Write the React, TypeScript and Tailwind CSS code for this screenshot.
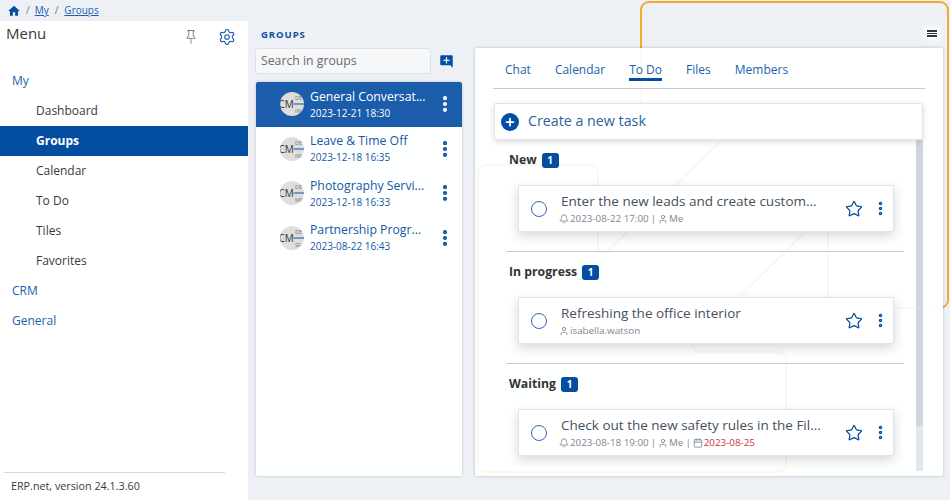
import { useId } from "react"
import { Bell, Calendar, EllipsisVertical, Plus, Settings, Star, User } from "lucide-react"
import { BsPin } from "react-icons/bs"
import { MdAddComment, MdHome } from "react-icons/md"

type Group = { title: string; date: string; initials: string; active?: boolean }

type Task = {
  status: string
  title: string
  reminder?: string
  owner: string
  due?: string
}

const groups: Group[] = [
  { title: "General Conversat...", date: "2023-12-21 18:30", initials: "IW", active: true },
  { title: "Leave & Time Off", date: "2023-12-18 16:35", initials: "IW" },
  { title: "Photography Servi...", date: "2023-12-18 16:33", initials: "MP" },
  { title: "Partnership Progr...", date: "2023-08-22 16:43", initials: "SF" },
]

const tasks: Task[] = [
  { status: "New", title: "Enter the new leads and create custom...", reminder: "2023-08-22 17:00", owner: "Me" },
  { status: "In progress", title: "Refreshing the office interior", owner: "isabella.watson" },
  { status: "Waiting", title: "Check out the new safety rules in the Fil...", reminder: "2023-08-18 19:00", owner: "Me", due: "2023-08-25" },
]

function Avatar({ initials }: { initials: string }) {
  const clipId = useId()
  return (
    <svg width="24" height="24" viewBox="0 0 24 24" className="shrink-0">
      <defs>
        <clipPath id={clipId}>
          <circle cx="12" cy="12" r="12" />
        </clipPath>
      </defs>
      <circle cx="12" cy="12" r="12" fill="#dedede" />
      <g clipPath={`url(#${clipId})`} fontFamily="'Open Sans', sans-serif">
        <text x="-1.5" y="15.5" fontSize="10" fill="#333">CM</text>
        <path d="M13.5 12H24" stroke="#0b55a8" strokeWidth="1" />
        <text x="15" y="8" fontSize="5.5" fill="#777">DE</text>
        <text x="15" y="20.5" fontSize="5.5" fill="#777">{initials}</text>
      </g>
    </svg>
  )
}

function NavItem({ label, active }: { label: string; active?: boolean }) {
  return (
    <div
      className={
        active
          ? "h-[30px] pl-[36px] flex items-center text-[12px] font-bold bg-[#044ea1] text-white"
          : "h-[30px] pl-[36px] flex items-center text-[12px] text-[#3a3a3a]"
      }
    >
      {label}
    </div>
  )
}

function NavRoot({ label }: { label: string }) {
  return <div className="h-[30px] pl-[12px] flex items-center text-[12px] text-[#1d5fae]">{label}</div>
}

function GroupRow({ group }: { group: Group }) {
  return (
    <div
      className={
        group.active
          ? "h-[44.5px] flex items-center pl-[24px] bg-[#1b5dab] text-white rounded-t-[2px]"
          : "h-[44.5px] flex items-center pl-[24px] text-[#1558a8]"
      }
    >
      <Avatar initials={group.initials} />
      <div className="ml-[6px] mb-[1px] w-[123px] leading-none">
        <div className="text-[12.25px] h-[18px] leading-[18px] whitespace-nowrap">{group.title}</div>
        <div className="text-[10px] h-[14px] leading-[14px] whitespace-nowrap">{group.date}</div>
      </div>
      <EllipsisVertical size={20} strokeWidth={3} className={group.active ? "ml-[2px] text-white" : "ml-[2px] text-[#0c4f9e]"} />
    </div>
  )
}

function TaskSection({ task, first }: { task: Task; first?: boolean }) {
  return (
    <div className={first ? "h-[112px] pt-[12px] border-t border-transparent" : "h-[112px] pt-[12px] border-t border-[#c9c9c9]"}>
      <div className="flex items-center h-[16px] pl-[3px] gap-[5px]">
        <span className="text-[12.25px] font-bold text-[#333]">{task.status}</span>
        <span className="w-[17px] h-[15px] rounded-[3px] bg-[#044ea1] text-white text-[10px] font-bold flex items-center justify-center">1</span>
      </div>
      <div className="ml-[12px] mt-[17px] w-[376px] h-[47px] bg-white rounded-[2px] border border-[#e3e3e3] shadow-[0_4px_12px_rgba(0,0,0,0.16)] flex items-center">
        <span className="ml-[12px] w-[16px] h-[16px] shrink-0 rounded-full border-[1.5px] border-[#2f69b3]" />
        <div className="ml-[14px] mb-[1px] w-[270px] shrink-0">
          <div className="text-[13.5px] leading-[21px] text-[#44505e] whitespace-nowrap">{task.title}</div>
          <div className="flex items-center text-[9.8px] leading-[14px] text-[#7b8794] -ml-[2px] whitespace-nowrap">
            {task.reminder && (
              <>
                <Bell size={10} className="mr-[1px]" />
                <span>{task.reminder}</span>
                <span className="mx-[2px]">|</span>
              </>
            )}
            <User size={10} className="mr-[1px]" />
            <span>{task.owner}</span>
            {task.due && (
              <>
                <span className="mx-[2px]">|</span>
                <Calendar size={10} className="mr-[1px]" />
                <span className="text-[#d2323f]">{task.due}</span>
              </>
            )}
          </div>
        </div>
        <Star size={18} strokeWidth={1.7} className="ml-[14px] text-[#0c4f9e]" />
        <EllipsisVertical size={17} strokeWidth={3} className="ml-[9px] text-[#0c4f9e]" />
      </div>
    </div>
  )
}

export default function App() {
  return (
    <div className="relative w-[950px] h-[500px] overflow-hidden bg-[#edf0f5] font-['Open_Sans',sans-serif]">
      {/* orange frame behind the panels */}
      <svg width="950" height="500" className="absolute inset-0" fill="none">
        <path d="M641 140V10a8 8 0 0 1 8-8H940a8 8 0 0 1 8 8V300a8 8 0 0 1-8 8H930" stroke="#f5a733" strokeWidth="2" />
      </svg>

      <div className="relative flex flex-col h-full">
        <div className="h-[21px] flex items-center pl-[7px] text-[10px] text-[#1d5fae]">
          <MdHome size={14} className="text-[#044ea1]" />
          <span className="mx-[5px] text-[#777]">/</span>
          <span className="underline">My</span>
          <span className="mx-[6px] text-[#777]">/</span>
          <span className="underline">Groups</span>
        </div>

        <div className="flex flex-1 min-h-0">
          <aside className="w-[248px] bg-white flex flex-col">
            <div className="flex items-start h-[45px] pl-[6px]">
              <span className="text-[15px] leading-[24px] text-[#3a3a3a]">Menu</span>
              <BsPin size={14} className="ml-auto mt-[9px] text-[#777]" />
              <Settings size={18} strokeWidth={1.5} className="ml-[20px] mr-[12px] mt-[7px] text-[#1558a8]" />
            </div>
            <NavRoot label="My" />
            <NavItem label="Dashboard" />
            <NavItem label="Groups" active />
            <NavItem label="Calendar" />
            <NavItem label="To Do" />
            <NavItem label="Tiles" />
            <NavItem label="Favorites" />
            <NavRoot label="CRM" />
            <NavRoot label="General" />
            <div className="mt-auto mx-[4px] w-[221px] h-[28px] border-t border-[#d9d9d9] pl-[7px] flex items-center text-[10.75px] text-[#3a3a3a]">
              ERP.net, version 24.1.3.60
            </div>
          </aside>

          <section className="w-[227px] flex flex-col pl-[7px] pt-[7px]">
            <div className="pl-[6px] h-[13px] leading-[13px] text-[9.5px] font-bold tracking-[0.1em] text-[#0d4f9e]">GROUPS</div>
            <div className="mt-[7px] flex items-center">
              <div className="w-[176px] h-[26px] bg-[#f5f7f9] border border-[#dfe3e8] rounded-[3px] pl-[5px] flex items-center text-[12.25px] text-[#6b6b6b]">
                Search in groups
              </div>
              <MdAddComment size={15} className="ml-[8px] text-[#044ea1]" />
            </div>
            <div className="mt-[8px] ml-[1px] w-[206px] h-[394px] bg-white/95 rounded-[2px] shadow-[0_0_3px_rgba(0,0,0,0.2)]">
              {groups.map((g) => (
                <GroupRow key={g.title} group={g} />
              ))}
            </div>
          </section>

          <section className="relative mt-[27px] w-[468px] h-[428px] bg-white/95 rounded-[2px] shadow-[0_0_3px_rgba(0,0,0,0.25)] pl-[18px]">
            {/* faint background shapes showing through the panel */}
            <svg width="468" height="428" className="absolute inset-0 pointer-events-none" fill="none" stroke="#fef5e8" strokeWidth="1.5">
              <path d="M3 125a8 8 0 0 1 8-8H115a8 8 0 0 1 8 8V200a6 6 0 0 0 10 3L250 89" />
              <path d="M3 125V416a8 8 0 0 0 8 8H303a8 8 0 0 0 8-8V312a8 8 0 0 0-8-8H225a8 8 0 0 1-8-8" />
              <path d="M353 180V260H440" />
              <path d="M330 184L265 248" />
            </svg>

            <div className="relative w-[432px] h-[41px] border-b border-[#c9c9c9] flex items-start pl-[12px] gap-[24px] text-[12px] text-[#1d5fae]">
              <span className="mt-[13px]">Chat</span>
              <span className="mt-[13px]">Calendar</span>
              <span className="h-[33px] pt-[13px] border-b-[3px] border-[#044ea1]">To Do</span>
              <span className="mt-[13px]">Files</span>
              <span className="mt-[13px]">Members</span>
            </div>

            <div className="relative mt-[14px] flex">
              <div className="w-[430px]">
                <div className="relative z-10 ml-[1px] w-[429px] h-[37px] bg-white rounded-[2px] border border-[#e3e3e3] shadow-[0_2px_6px_rgba(0,0,0,0.14)] flex items-center pl-[6px]">
                  <span className="w-[18px] h-[18px] rounded-full bg-[#044ea1] flex items-center justify-center">
                    <Plus size={12} strokeWidth={3.5} className="text-white" />
                  </span>
                  <span className="ml-[9px] mb-[2px] text-[14.25px] text-[#2f5f9e]">Create a new task</span>
                </div>
                <div className="pl-[13px] pr-[19px] -mt-[1px]">
                  {tasks.map((t, i) => (
                    <TaskSection key={t.status} task={t} first={i === 0} />
                  ))}
                </div>
              </div>
            </div>

            {/* scrollbar */}
            <div className="absolute left-[441px] top-[92px] w-[7px] h-[331px] bg-[#e3e6eb]">
              <div className="h-[286px] bg-[#d2d6dc]" />
            </div>
          </section>
        </div>
      </div>

      <div className="absolute left-[927px] top-[30px] w-[10px] flex flex-col items-center gap-[1px] shadow-[0_0_4px_4px_rgba(255,255,255,0.6)] bg-white/60">
        <span className="w-[10px] h-[1.5px] bg-[#333]" />
        <span className="w-[10px] h-[1.5px] bg-[#333]" />
        <span className="w-[10px] h-[1.5px] bg-[#333]" />
      </div>
    </div>
  )
}
